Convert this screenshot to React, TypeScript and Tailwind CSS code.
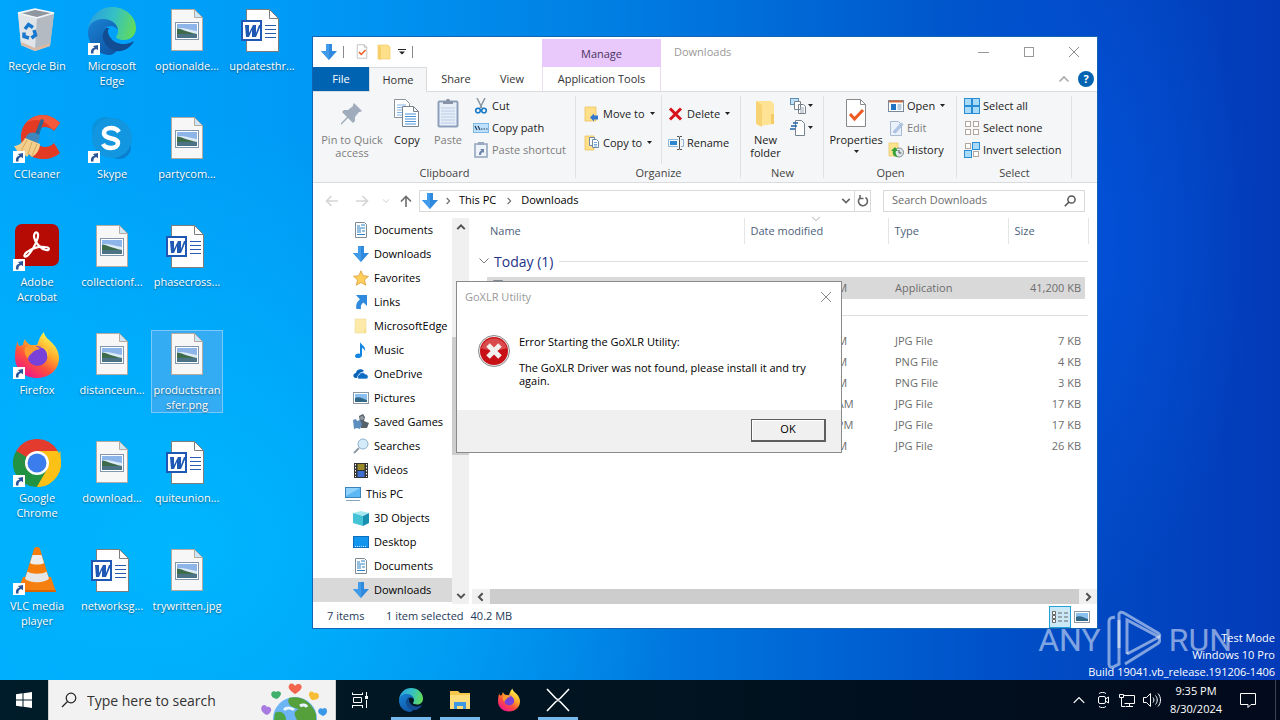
import type { ReactNode } from "react"

type IconProps = { className?: string }

/* ---------- small glyphs ---------- */

const Caret = ({ className = "w-[5px]" }: IconProps) => (
  <svg viewBox="0 0 6 4" className={className}>
    <path d="M0 0h6L3 3.6z" fill="#222" />
  </svg>
)

const Chevron = ({ className = "w-2 text-[#505050]", dir = "down", weight = 1.6 }: IconProps & { dir?: "up" | "down" | "left" | "right"; weight?: number }) => {
  const paths = {
    down: "M1.5 3.5L6 8l4.500-4.500",
    up: "M1.500 8.500L6 4l4.500 4.500",
    left: "M8 1.500L3.500 6L8 10.500",
    right: "M4 1.500L8.500 6L4 10.500",
  }
  return (
    <svg viewBox="0 0 12 12" className={className} fill="none" stroke="currentColor" strokeWidth={weight}>
      <path d={paths[dir]} />
    </svg>
  )
}

const CloseIcon = ({ className = "w-3" }: IconProps) => (
  <svg viewBox="0 0 12 12" className={className} stroke="currentColor" strokeWidth="1" fill="none">
    <path d="M1 1l10 10M11 1L1 11" />
  </svg>
)

const SearchGlass = ({ className = "w-4", weight = 1.5 }: IconProps & { weight?: number }) => (
  <svg viewBox="0 0 16 16" className={className} stroke="currentColor" strokeWidth={weight} fill="none">
    <circle cx="10" cy="6" r="4.800" />
    <path d="M6.500 9.500L1 15" />
  </svg>
)

/* ---------- desktop icons ---------- */

const ShortcutBadge = () => (
  <svg viewBox="0 0 12 12" className="absolute bottom-0 left-0 w-3">
    <rect width="12" height="12" fill="#fff" />
    <path d="M3 10.500C2.500 7 4 5 6.500 4.800L5 3l5-1v5.200L8.300 6C6 6.500 5.200 8 5.500 10.500z" fill="#2a5699" />
  </svg>
)

const RecycleBinIcon = () => (
  <svg viewBox="0 0 48 48" className="size-12">
    <path d="M5 6l17-4 19 4-4 33-15 5-14-6z" fill="#cdd3d8" />
    <path d="M5 6l19 5-2 33-14-6z" fill="#dfe4e8" />
    <path d="M24 11l17-5-4 33-15 5z" fill="#b3bac1" />
    <path d="M7 7l15-4 17 3-15 4z" fill="#8f979e" />
    <path d="M8 35l14 6 15-5-.5 3-14.500 5-14-6z" fill="#d9b9a6" />
    <path d="M5 6l17-4 19 4-17 5z" fill="none" stroke="#f3f6f8" strokeWidth="1.500" />
    <g fill="none" stroke="#1878cf" strokeWidth="3.500">
      <path d="M12 22l3.500-4.500 4.500 3" />
      <path d="M21 23l1.500 5-4 3" />
      <path d="M16 31l-5-1.500 0-4" />
    </g>
  </svg>
)

const EdgeIcon = ({ className = "size-12" }: IconProps) => (
  <svg viewBox="0 0 48 48" className={className}>
    <defs>
      <linearGradient id="edge-top" x1="0" y1="0.400" x2="1" y2="0.600">
        <stop offset="0" stopColor="#2b9fe0" />
        <stop offset="0.500" stopColor="#35c1c4" />
        <stop offset="1" stopColor="#62dc58" />
      </linearGradient>
      <linearGradient id="edge-left" x1="0" y1="0" x2="0.600" y2="1">
        <stop offset="0" stopColor="#1a83d4" />
        <stop offset="1" stopColor="#1058a8" />
      </linearGradient>
    </defs>
    <path d="M0 24C1 9 12 0 24 0c14 0 24 10 24 21 0 8-6 12-12 12-5 0-8-2-8-3 0-1 2-2 2-6 0-5-5-11-14-11C8 13 2 17 0 24z" fill="url(#edge-top)" />
    <path d="M0 25c0-8 7-13 15-13 9 0 14 5 15 11-2-3-5-4-7-4-5 0-8 4-8 9 0 9 7 15 15 15-3 3-6 5-9 5C9 47 0 37 0 25z" fill="url(#edge-left)" />
    <path d="M18 21c-3 3-4 7-3 11 2 8 10 13 18 12 5-1 9-4 12-8 1-1 0-2-1-1-8 4-18 2-22-5-2-3-3-6-1-9z" fill="#124c93" />
  </svg>
)

const ImageFileIcon = () => (
  <svg viewBox="0 0 48 48" className="size-12">
    <path d="M8.500 2.500h23l8 8v33h-31z" fill="#f7f7f7" stroke="#b5aaa2" />
    <path d="M31.500 2.500v8h8z" fill="#cfe6f7" stroke="#b5aaa2" />
    <rect x="12.500" y="15.500" width="23" height="17" fill="#fff" stroke="#8197ad" />
    <rect x="14" y="17" width="20" height="14" fill="#8db5ea" />
    <path d="M14 22c5-3 12 1 20 2v3H14z" fill="#dcebf5" />
    <path d="M14 22c4-1 8 3 20 5v1H14z" fill="#3d6b4b" />
    <path d="M14 27h20v4H14z" fill="#4c7385" />
  </svg>
)

const WordFileIcon = () => (
  <svg viewBox="0 0 48 48" className="size-12">
    <path d="M8.500 2.500h23l9 9v33h-32z" fill="#fff" stroke="#7d7d7d" />
    <path d="M31.500 2.500v9h9z" fill="#fff" stroke="#7d7d7d" />
    <path d="M27 18.500h11M27 22.500h11M27 26.500h11M27 30.500h11" stroke="#2a5bb0" strokeWidth="1.200" />
    <rect x="3" y="13" width="21" height="21" fill="#1f57b4" />
    <rect x="5" y="15" width="17" height="17" fill="#fff" />
    <path d="M7 18h4l0 8 4-8h3l0 8 3-8h2l-5 12h-4v-7l-3 7H8z" fill="#1f57b4" />
  </svg>
)

const CCleanerIcon = () => (
  <svg viewBox="0 0 48 48" className="size-12">
    <path d="M47 8C42 3 36 0 30 0 18 0 8 9 8 22s9 22 22 22c7 0 12-2 17-6l-6-10c-3 3-6 4-9 4-6 0-10-4-10-10s4-10 10-10c3 0 6 1 9 4z" fill="#e23a23" />
    <path d="M47 8C42 3 36 0 30 0c-7 0-13 3-17 8 6-4 17-5 24 4l4 3z" fill="#f25a3c" />
    <path d="M28 4l3 1-6 18-4-2z" fill="#2f6593" />
    <path d="M14 20c4-4 9-3 13 1l-2 7-13-4z" fill="#3f86bd" />
    <path d="M12 23l15 6c0 5-3 10-8 13l-3-3-2 3-4-4-4 1-5-8c5 0 9-4 11-8z" fill="#f3cf8d" />
    <path d="M14 25l-6 11M19 27l-4 12M24 29l-5 12" stroke="#d9a95c" fill="none" />
  </svg>
)

const SkypeIcon = () => (
  <svg viewBox="0 0 48 48" className="size-12">
    <circle cx="17" cy="15" r="13" fill="#0a93dc" />
    <circle cx="31" cy="32" r="12" fill="#0a7fd0" />
    <circle cx="24" cy="23" r="20" fill="#1296df" />
    <path d="M31 17c-2-3-5-4-8-4-4 0-7 2-7 5 0 7 14 4 14 10 0 3-3 5-7 5s-7-2-8-4" fill="none" stroke="#fff" strokeWidth="4.500" />
  </svg>
)

const AcrobatIcon = () => (
  <svg viewBox="0 0 48 48" className="size-12">
    <rect x="2" y="1" width="44" height="42" rx="7" fill="#b50b04" />
    <path d="M22 10c3-2 4 2 2 7-2 6-7 14-10 16s-4-1 0-4c5-4 13-6 18-5 5 0 5 4 1 3-5-1-11-7-12-13 0-2 0-3 1-4z" fill="none" stroke="#fff" strokeWidth="2.200" />
  </svg>
)

const FirefoxIcon = ({ className = "size-12" }: IconProps) => (
  <svg viewBox="0 0 48 48" className={className}>
    <defs>
      <linearGradient id="fx-body" x1="0.800" y1="0.100" x2="0.250" y2="0.950">
        <stop offset="0" stopColor="#fff44f" />
        <stop offset="0.350" stopColor="#ffa82a" />
        <stop offset="0.650" stopColor="#ff4f3c" />
        <stop offset="1" stopColor="#f0188a" />
      </linearGradient>
    </defs>
    <path d="M5 10c0 2 0 4 1 5l4-1c0-2 1-4 2-6 1 3 3 5 6 6h6c2-5 3-9 7-13 0 5 6 8 9 12 3 3 6 8 6 14 0 11-9 20-22 20S2 38 2 26c0-6 1-12 3-16z" fill="url(#fx-body)" />
    <circle cx="24.500" cy="25" r="10" fill="#7a41d8" />
    <path d="M12 17c4-4 12-3 15 1-5 1-6 2-8 4s-4 3-4 6c-3-3-4-7-3-11z" fill="#ff9a2e" />
    <path d="M25 16c6 0 10 4 9 10 3-4 2-12-9-10z" fill="#ffc83a" />
  </svg>
)

const ChromeIcon = () => (
  <svg viewBox="0 0 48 48" className="size-12">
    <path d="M24 24L3.200 12A24 24 0 0 1 44.800 12z" fill="#e33b2e" />
    <path d="M24 24L44.800 12A24 24 0 0 1 24 48z" fill="#fbc116" />
    <path d="M24 24L24 48A24 24 0 0 1 3.200 12z" fill="#229342" />
    <path d="M24 12h20.800L34.400 30z" fill="#fbc116" />
    <path d="M34.400 30L24 48 13.600 30z" fill="#229342" />
    <path d="M13.600 30L3.200 12 24 12z" fill="#e33b2e" />
    <path d="M3.200 12L13.600 30 24 24z" fill="#229342" />
    <path d="M34.400 30L24 48l8-1c8-4 14-10 15.500-19V12z" fill="#fbc116" />
    <circle cx="24" cy="24" r="12" fill="#fff" />
    <circle cx="24" cy="24" r="9.500" fill="#3b7dec" />
  </svg>
)

const VlcIcon = () => (
  <svg viewBox="0 0 48 48" className="size-12">
    <path d="M10 30h28l5 15H4z" fill="#f58010" />
    <path d="M4 43h39v2H4z" fill="#d96500" />
    <path d="M24 0c2 0 3 1 3 2l9 29c0 6-24 6-24 0L21 2c0-1 1-2 3-2z" fill="#f47d0b" />
    <path d="M19.500 8h9l2.500 8c-3 2-11 2-14 0z" fill="#eee" />
    <path d="M14.500 24.500c4 3 15 3 19 0l2.500 7c-4 5-20 5-24 0z" fill="#e6e6e6" />
  </svg>
)

/* ---------- explorer icons ---------- */

const DownArrow = ({ className = "size-4" }: IconProps) => (
  <svg viewBox="0 0 16 16" className={className}>
    <path d="M5 0h6v7h5l-8 9-8-9h5z" fill="#2f8ade" />
    <path d="M5 0h3v16L0 7h5z" fill="#409bea" />
  </svg>
)

const FolderIcon = ({ className = "size-4" }: IconProps) => (
  <svg viewBox="0 0 16 16" className={className}>
    <path d="M2 1h10l2 2v12H2z" fill="#ffe08a" stroke="#eec255" strokeWidth="0.600" />
    <path d="M2 1l3 2v13l-3-1z" fill="#f6cf6b" />
  </svg>
)

const PaleFolderIcon = () => (
  <svg viewBox="0 0 16 16" className="size-4">
    <path d="M2 1h11v14H2z" fill="#fdeaa8" stroke="#eddb9b" strokeWidth="0.600" />
    <path d="M11 11h2v4h-2z" fill="#f6dd8c" />
  </svg>
)

const DocIcon = () => (
  <svg viewBox="0 0 16 16" className="size-4">
    <path d="M2.500.5h9l2 2v13h-11z" fill="#fff" stroke="#7f8b95" />
    <path d="M4 4h3M8 3h4M4 6h8M4 8h4M9 9h3M4 10h4M4 12.500h8" stroke="#2d84c4" strokeWidth="1.200" />
  </svg>
)

const StarIcon = () => (
  <svg viewBox="0 0 16 16" className="size-4">
    <path d="M8 .8l2.200 4.900 5.300.6-4 3.600 1.200 5.300L8 12.500l-4.700 2.700 1.200-5.300-4-3.600 5.300-.6z" fill="#ffcf5c" stroke="#d99b38" strokeWidth="0.800" />
  </svg>
)

const LinkArrowIcon = () => (
  <svg viewBox="0 0 16 16" className="size-4">
    <path d="M3 1h11v11l-3.500-3.500C8 10 7.500 12 8 15H3.500C2.500 11 4 7.500 7 5.500z" fill="#2f8ade" />
  </svg>
)

const MusicIcon = () => (
  <svg viewBox="0 0 16 16" className="size-4">
    <path d="M7 0c1 3 6 4 5 9-1-2-2-3-3-3v7c0 4-7 4-7 1 0-2 3-3 5-2z" fill="#1485e0" />
  </svg>
)

const OneDriveIcon = () => (
  <svg viewBox="0 0 16 16" className="size-4">
    <path d="M3 12c-4 0-3-5 0-5 0-4 6-5 8-2l-4 2-3 5z" fill="#0a64b8" />
    <path d="M6 13c-2 0-2-4 0-4 1-3 5-3 6-1 4 0 4 5 1 5z" fill="#0f6ec4" stroke="#fff" strokeWidth="0.600" />
  </svg>
)

const PictureIcon = () => (
  <svg viewBox="0 0 16 16" className="size-4">
    <rect x="0.500" y="2.500" width="15" height="11" fill="#fff" stroke="#8c98a4" />
    <rect x="2" y="4" width="12" height="8" fill="#8ac0ef" />
    <path d="M2 8c4-2 8 1 12 2v2H2z" fill="#336788" />
  </svg>
)

const GamesIcon = () => (
  <svg viewBox="0 0 16 16" className="size-4">
    <path d="M6 2l4-2 2 3-1 4 5 2-2 5H8z" fill="#56616b" />
    <path d="M0 6l3-1 1 2 3-1 2 4-2 5-3-1-3 1z" fill="#5d8fbe" />
    <circle cx="9" cy="4" r="2" fill="#909aa3" />
  </svg>
)

const SearchesIcon = () => (
  <svg viewBox="0 0 16 16" className="size-4">
    <path d="M6 10l-5 5" stroke="#8d9aa8" strokeWidth="2" />
    <circle cx="10" cy="6" r="5" fill="#d4ebfa" stroke="#8fb0c8" />
  </svg>
)

const VideosIcon = () => (
  <svg viewBox="0 0 16 16" className="size-4">
    <rect x="1" y="1" width="14" height="15" fill="#333" />
    <path d="M2.500 2v13M13.500 2v13" stroke="#fff" strokeDasharray="1.500 1.500" />
    <rect x="4.500" y="2" width="7" height="6" fill="#9a8a2a" />
    <rect x="4.500" y="9" width="7" height="6" fill="#3c6fd0" />
  </svg>
)

const PcIcon = () => (
  <svg viewBox="0 0 16 16" className="size-4">
    <rect x="0.500" y="1.500" width="15" height="10" fill="#5bb8f5" stroke="#3b83b8" />
    <path d="M1 2h14L1 10z" fill="#8fd2fb" />
    <path d="M1 14.500h14" stroke="#8ba4b8" />
  </svg>
)

const CubeIcon = () => (
  <svg viewBox="0 0 16 16" className="size-4">
    <path d="M0 3l8-2 8 2-6 3z" fill="#a5e8f0" />
    <path d="M0 3l10 3v10L0 13z" fill="#45c3d6" />
    <path d="M10 6l6-3v10l-6 3z" fill="#178fae" />
  </svg>
)

const DesktopIcon = () => (
  <svg viewBox="0 0 16 16" className="size-4">
    <rect x="0.500" y="2.500" width="15" height="11" fill="#1195ee" stroke="#0b6fbd" />
    <path d="M2 12.500h12" stroke="#cbe7fb" strokeDasharray="1 1" />
  </svg>
)

/* ---------- ribbon icons ---------- */

const PinIcon = () => (
  <svg viewBox="0 0 32 32" className="size-8">
    <path d="M18 5l8 8-2 1-1 0-4 5 0 4-2 2-5-5-6 6-1 1 0-2 6-6-5-5 2-2 4 0 5-4 0-1z" fill="#a0acbc" />
  </svg>
)

const CopyIcon = () => (
  <svg viewBox="0 0 32 32" className="size-8">
    <path d="M3.500 1.500h11l4 4v14h-15z" fill="#fff" stroke="#8a939c" />
    <path d="M6 7h9M6 9.500h10M6 12h10M6 14.500h10M6 17h10" stroke="#7fb4e4" />
    <path d="M11.500 8.500h11l5 5v15h-16z" fill="#fff" stroke="#7a838c" />
    <path d="M22.500 8.500v5h5" fill="none" stroke="#7a838c" />
    <path d="M14 16h11M14 18.500h11M14 21h11M14 23.500h11M14 26h11" stroke="#4a92d8" />
  </svg>
)

const PasteIcon = () => (
  <svg viewBox="0 0 32 32" className="size-8">
    <rect x="6.500" y="3.500" width="19" height="25" rx="1" fill="#e6eef8" stroke="#8e9fbb" strokeWidth="2" />
    <path d="M11 6V3h3c0-3 4-3 4 0h3v3z" fill="#8794a8" />
    <path d="M9 10h14M9 13h14M9 16h14M9 19h14M9 22h14M9 25h14" stroke="#b9cce6" />
  </svg>
)

const CutIcon = () => (
  <svg viewBox="0 0 16 16" className="size-4" fill="none">
    <path d="M4 0l5 10M12 0L7 10" stroke="#8896a4" strokeWidth="1.500" />
    <circle cx="5" cy="12.500" r="2.300" stroke="#1979c9" strokeWidth="1.600" />
    <circle cx="11" cy="12.500" r="2.300" stroke="#1979c9" strokeWidth="1.600" />
  </svg>
)

const CopyPathIcon = () => (
  <svg viewBox="0 0 16 16" className="size-4">
    <rect x="0.500" y="3.500" width="15" height="9" fill="#bfe0fa" stroke="#7db7e4" />
    <path d="M2 6l2 4M5 6l2 4M8 9h1.500M10.500 9H12M13 9h1.500" stroke="#20405f" strokeWidth="1.200" />
  </svg>
)

const PasteShortcutIcon = () => (
  <svg viewBox="0 0 16 16" className="size-4">
    <rect x="2" y="2" width="12" height="13" fill="#eef3fa" stroke="#98a7bf" strokeWidth="1.600" />
    <rect x="5" y="0" width="6" height="3" fill="#98a7bf" />
    <path d="M6 13c0-3 1-4 2.500-4.500L7 7h4v4l-1-1c-1 .5-2 1-2 3z" fill="#6d83a8" />
  </svg>
)

const MoveToIcon = () => (
  <svg viewBox="0 0 16 16" className="size-4">
    <path d="M1 1h11v14H1z" fill="#ffdf88" stroke="#e9bd55" strokeWidth="0.700" />
    <path d="M14 9.500v4h-4v2l-4-4 4-4v2z" fill="#3276cf" />
  </svg>
)

const CopyToIcon = () => (
  <svg viewBox="0 0 16 16" className="size-4">
    <path d="M1 1h9v14H1z" fill="#ffdf88" stroke="#e9bd55" strokeWidth="0.700" />
    <path d="M5.500 2.500h5v8h-5z" fill="#fff" stroke="#6e8aa6" />
    <path d="M8.500 4.500h4l2 2v6h-6z" fill="#fff" stroke="#6e8aa6" />
    <path d="M10 7.500h3M10 9.500h3M10 11h3" stroke="#4a92d8" strokeWidth="0.800" />
  </svg>
)

const DeleteIcon = () => (
  <svg viewBox="0 0 16 16" className="size-4" stroke="#d8121c" strokeWidth="3" fill="none">
    <path d="M2 2.500l11 11M13 2.500l-11 11" />
  </svg>
)

const RenameIcon = () => (
  <svg viewBox="0 0 16 16" className="size-4" fill="none">
    <path d="M10 4.500H.5v7H10M13 4.500h2.500v7H13" stroke="#8eb4d8" />
    <rect x="2" y="6" width="7" height="4" fill="#2b86d2" />
    <path d="M9 1.500h2l.5.5.5-.5h2M9 14.500h2l.5-.5.5.5h2M11.500 2v12" stroke="#555" />
  </svg>
)

const NewFolderIcon = () => (
  <svg viewBox="0 0 32 32" className="size-8">
    <path d="M6 3h15l3 3v20l-15 2-3-2z" fill="#ffe394" />
    <path d="M6 3l6 4v22l-6-4z" fill="#f8d374" />
    <path d="M21 16h3v10h-3z" fill="#f4cb66" />
  </svg>
)

const NewItemIcon = () => (
  <svg viewBox="0 0 16 16" className="size-4" fill="#fff">
    <rect x="0.500" y="0.500" width="8" height="6" fill="#bfe0fa" stroke="#5f8fb3" />
    <path d="M4.500 3.500h6v8h-6zM8.500 6.500h5l2 2v7h-7z" stroke="#76828d" />
    <path d="M10 10h4M10 12h4M10 14h4" stroke="#9aa6b0" />
  </svg>
)

const EasyAccessIcon = () => (
  <svg viewBox="0 0 16 16" className="size-4" fill="none">
    <path d="M5.500.5h6l3 3v12h-9z" fill="#fff" stroke="#76828d" />
    <path d="M3 3h5M1 6h6M0 9h5" stroke="#1f66ae" strokeWidth="1.400" />
  </svg>
)

const PropertiesIcon = ({ className = "size-8" }: IconProps) => (
  <svg viewBox="0 0 32 32" className={className}>
    <path d="M6.500 1.500h14l5 5v22h-19z" fill="#fff" stroke="#8a8a8a" />
    <path d="M20.500 1.500v5h5" fill="none" stroke="#8a8a8a" />
    <path d="M10 16l4.500 5L23 12" fill="none" stroke="#ee5a24" strokeWidth="3" />
  </svg>
)

const OpenIcon = () => (
  <svg viewBox="0 0 16 16" className="size-4">
    <rect x="0.500" y="2.500" width="15" height="11" fill="#fff" stroke="#77899b" />
    <path d="M1 3.500h14" stroke="#d16b3c" strokeWidth="2" />
    <rect x="3" y="6" width="5" height="6" fill="#1f75c4" />
    <path d="M9.500 7h4M9.500 9h4M9.500 11h4" stroke="#6c9ac2" />
  </svg>
)

const EditIcon = () => (
  <svg viewBox="0 0 16 16" className="size-4">
    <path d="M2.500 1.500h8l3 3v11h-11z" fill="#e9f1fb" stroke="#a9b9d2" />
    <path d="M5 12l8-9 2 1.500L7.500 13z" fill="#b3c7e6" stroke="#8ea7cc" strokeWidth="0.600" />
  </svg>
)

const HistoryIcon = () => (
  <svg viewBox="0 0 16 16" className="size-4">
    <path d="M1 1h9v13H1z" fill="#ffe48f" stroke="#e6c25e" strokeWidth="0.700" />
    <circle cx="11" cy="10.500" r="4.500" fill="#dfe7ea" stroke="#808b90" />
    <path d="M11 8v3h2.500" fill="none" stroke="#555" />
    <path d="M10 15c-4 0-6-3-5-6H3l4-4 3 4H8c-1 2 0 4 2 6z" fill="#35a138" />
  </svg>
)

const SelectIcon = ({ filled }: { filled: boolean[] }) => (
  <svg viewBox="0 0 16 16" className="size-4">
    {filled.map((on, i) => {
      const x = (i % 2) * 8
      const y = Math.floor(i / 2) * 8
      return on ? (
        <rect key={i} x={x + 0.5} y={y + 0.5} width="7" height="7" fill="#a8dafa" stroke="#2a8dd4" />
      ) : (
        <rect key={i} x={x + 1.5} y={y + 1.5} width="5" height="5" fill="#fff" stroke="#b3a79d" />
      )
    })}
  </svg>
)

const ErrorIcon = () => (
  <svg viewBox="0 0 32 32" className="size-8 shrink-0">
    <circle cx="16" cy="16" r="15.500" fill="#ececec" stroke="#8b8b8b" />
    <circle cx="16" cy="16" r="14" fill="#c81117" />
    <path d="M3 13a13.500 13.500 0 0 1 26 0c-8 3-18 3-26 0z" fill="#d94a4c" />
    <path d="M10 10l12 12M22 10L10 22" stroke="#f1f1ee" strokeWidth="5" />
  </svg>
)

/* ---------- desktop ---------- */

type DesktopItem = { label: string; icon: ReactNode; shortcut?: boolean; selected?: boolean }

const desktopItems: DesktopItem[] = [
  { label: "Recycle Bin", icon: <RecycleBinIcon /> },
  { label: "CCleaner", icon: <CCleanerIcon />, shortcut: true },
  { label: "Adobe Acrobat", icon: <AcrobatIcon />, shortcut: true },
  { label: "Firefox", icon: <FirefoxIcon />, shortcut: true },
  { label: "Google Chrome", icon: <ChromeIcon />, shortcut: true },
  { label: "VLC media player", icon: <VlcIcon />, shortcut: true },
  { label: "Microsoft Edge", icon: <EdgeIcon />, shortcut: true },
  { label: "Skype", icon: <SkypeIcon />, shortcut: true },
  { label: "collectionf...", icon: <ImageFileIcon /> },
  { label: "distanceun...", icon: <ImageFileIcon /> },
  { label: "download...", icon: <ImageFileIcon /> },
  { label: "networksg...", icon: <WordFileIcon /> },
  { label: "optionalde...", icon: <ImageFileIcon /> },
  { label: "partycom...", icon: <ImageFileIcon /> },
  { label: "phasecross...", icon: <WordFileIcon /> },
  { label: "productstransfer.png", icon: <ImageFileIcon />, selected: true },
  { label: "quiteunion...", icon: <WordFileIcon /> },
  { label: "trywritten.jpg", icon: <ImageFileIcon /> },
  { label: "updatesthr...", icon: <WordFileIcon /> },
]

const DesktopIcons = () => (
  <div className="grid grid-flow-col grid-rows-[repeat(6,108px)] auto-cols-[75px] w-max">
    {desktopItems.map((item) => (
      <button
        key={item.label}
        className={`mt-[6px] ml-px mr-[2px] self-start flex flex-col items-center border ${
          item.selected ? "border-[#7cc8f8] bg-[#33acf3]" : "border-transparent"
        }`}
      >
        <span className="relative block size-12">
          {item.icon}
          {item.shortcut && <ShortcutBadge />}
        </span>
        <span className="mt-[3px] w-full text-[11px] leading-[15px] text-white text-center break-words [text-shadow:0_1px_2px_rgba(0,0,0,0.5)]">
          {item.label}
        </span>
      </button>
    ))}
  </div>
)

/* ---------- explorer ribbon ---------- */

const RibbonGroup = ({ title, width, children }: { title: string; width: string; children: ReactNode }) => (
  <div className={`relative flex flex-col shrink-0 ${width}`}>
    <div className="flex flex-1 pt-[3px]">{children}</div>
    <div className="h-[18px] text-center leading-[18px] text-[#444]">{title}</div>
    <div className="absolute right-0 top-1 bottom-1 w-px bg-[#e0e1e2]" />
  </div>
)

const BigButton = ({ icon, children, width, dim }: { icon: ReactNode; children: ReactNode; width: string; dim?: boolean }) => (
  <button className={`flex flex-col items-center self-start pt-[3px] leading-[13px] ${width} ${dim ? "text-[#7d7d7d]" : "text-[#222]"}`}>
    {icon}
    <span className="mt-[3px]">{children}</span>
  </button>
)

const SmallButton = ({ icon, label, caret, dim }: { icon: ReactNode; label?: string; caret?: boolean; dim?: boolean }) => (
  <button className={`flex items-center h-[22px] whitespace-nowrap ${dim ? "text-[#7d7d7d]" : "text-[#222]"}`}>
    {icon}
    {label && <span className="ml-[3px]">{label}</span>}
    {caret && <Caret className={label ? "w-[5px] ml-[5px]" : "w-[5px] ml-[2px]"} />}
  </button>
)

const Ribbon = () => (
  <div className="flex h-[92px] bg-[#f5f6f7] border-y border-[#dadbdc]">
    <RibbonGroup title="Clipboard" width="w-[263px]">
      <BigButton width="w-[78px]" icon={<PinIcon />} dim>
        Pin to Quick access
      </BigButton>
      <BigButton width="w-[32px]" icon={<CopyIcon />}>Copy</BigButton>
      <BigButton width="w-[50px]" icon={<PasteIcon />} dim>Paste</BigButton>
      <div>
        <SmallButton icon={<CutIcon />} label="Cut" />
        <SmallButton icon={<CopyPathIcon />} label="Copy path" />
        <SmallButton icon={<PasteShortcutIcon />} label="Paste shortcut" dim />
      </div>
    </RibbonGroup>
    <RibbonGroup title="Organize" width="w-[165px]">
      <div className="flex flex-col gap-[7px] pt-2 pl-2 w-[86px] border-r border-[#e0e1e2]">
        <SmallButton icon={<MoveToIcon />} label="Move to" caret />
        <SmallButton icon={<CopyToIcon />} label="Copy to" caret />
      </div>
      <div className="flex flex-col gap-[7px] pt-2 pl-[6px]">
        <SmallButton icon={<DeleteIcon />} label="Delete" caret />
        <SmallButton icon={<RenameIcon />} label="Rename" />
      </div>
    </RibbonGroup>
    <RibbonGroup title="New" width="w-[83px]">
      <BigButton width="w-[49px]" icon={<NewFolderIcon />}>
        New folder
      </BigButton>
      <div>
        <SmallButton icon={<NewItemIcon />} caret />
        <SmallButton icon={<EasyAccessIcon />} caret />
      </div>
    </RibbonGroup>
    <RibbonGroup title="Open" width="w-[133px]">
      <BigButton width="w-[64px]" icon={<PropertiesIcon />}>
        <span className="flex flex-col items-center">
          Properties
          <Caret className="w-[5px] mt-1" />
        </span>
      </BigButton>
      <div>
        <SmallButton icon={<OpenIcon />} label="Open" caret />
        <SmallButton icon={<EditIcon />} label="Edit" dim />
        <SmallButton icon={<HistoryIcon />} label="History" />
      </div>
    </RibbonGroup>
    <RibbonGroup title="Select" width="w-[115px]">
      <div className="pl-[7px]">
        <SmallButton icon={<SelectIcon filled={[true, true, true, true]} />} label="Select all" />
        <SmallButton icon={<SelectIcon filled={[false, false, false, false]} />} label="Select none" />
        <SmallButton icon={<SelectIcon filled={[false, true, true, false]} />} label="Invert selection" />
      </div>
    </RibbonGroup>
  </div>
)

/* ---------- explorer header ---------- */

const TitleBar = () => (
  <div className="flex h-[54px]">
    <div className="flex flex-col w-[229px]">
      <div className="flex items-center h-[30px] pl-2 gap-[6px]">
        <DownArrow />
        <span className="w-px h-3 bg-[#8a8a8a]" />
        <button className="ml-1" aria-label="Properties"><PropertiesIcon className="size-4" /></button>
        <button aria-label="New folder"><FolderIcon /></button>
        <button aria-label="Customize toolbar">
          <svg viewBox="0 0 8 6" className="w-2">
            <path d="M0 .5h8" stroke="#222" />
            <path d="M1 2.500h6L4 5.500z" fill="#222" />
          </svg>
        </button>
        <span className="w-px h-3 bg-[#8a8a8a]" />
      </div>
      <div className="flex h-[24px] leading-[24px] text-[#333] text-center">
        <button className="w-[56px] bg-[#0063b1] text-white">File</button>
        <button className="relative w-[58px] h-[25px] leading-[22px] bg-[#f5f6f7] border border-b-0 border-[#dadbdc]">Home</button>
        <button className="w-[58px]">Share</button>
        <button className="w-[54px]">View</button>
      </div>
    </div>
    <div className="w-[119px] mt-[2px] text-center">
      <div className="h-[28px] leading-[29px] bg-[#e9c9fb] text-[#4a3360]">Manage</div>
      <button className="w-full h-[24px] leading-[24px] border-x border-[#eadcf2] text-[#333] whitespace-nowrap">Application Tools</button>
    </div>
    <div className="ml-[13px] leading-[30px] text-[#999]">Downloads</div>
    <div className="ml-auto flex flex-col text-[#8a8a8a]">
      <div className="flex h-[30px]">
        <button aria-label="Minimize" className="w-[45px] flex items-center justify-center"><span className="w-[11px] h-px bg-[#999]" /></button>
        <button aria-label="Maximize" className="w-[45px] flex items-center justify-center"><span className="size-[10px] border border-[#999]" /></button>
        <button aria-label="Close" className="w-[46px] flex items-center justify-center"><CloseIcon className="w-3" /></button>
      </div>
      <div className="flex items-center justify-end gap-[8px] h-[24px] pr-[3px]">
        <Chevron dir="up" className="w-3 text-[#aaa]" />
        <button aria-label="Help" className="size-4 rounded-full bg-[#0063b1] text-white font-bold text-[11px] leading-4">?</button>
      </div>
    </div>
  </div>
)

const NavArrow = ({ d, className }: IconProps & { d: string }) => (
  <svg viewBox="0 0 14 12" className={`w-[14px] ${className}`} fill="none" stroke="currentColor" strokeWidth="1.600">
    <path d={d} />
  </svg>
)

const AddressBar = () => (
  <div className="flex items-center h-[35px] px-3">
    <button aria-label="Back"><NavArrow d="M13 6H2M6.500 1L1.500 6l5 5" className="text-[#d5d5d5]" /></button>
    <button aria-label="Forward" className="ml-4"><NavArrow d="M1 6h11M7.500 1l5 5-5 5" className="text-[#d5d5d5]" /></button>
    <Chevron className="w-2 ml-[13px] text-[#ddd]" />
    <button aria-label="Up" className="ml-[9px]"><NavArrow d="M7 12V1.500M2 6.500l5-5 5 5" className="text-[#6d6d6d]" /></button>
    <div className="flex flex-1 items-center h-[22px] ml-[6px] border border-[#d9d9d9] pl-[2px]">
      <DownArrow />
      <Chevron dir="right" className="w-2 ml-[6px] text-[#666]" />
      <button className="ml-[7px] text-black">This PC</button>
      <Chevron dir="right" className="w-2 ml-[9px] text-[#666]" />
      <button className="ml-[8px] text-black">Downloads</button>
      <button aria-label="Previous locations" className="ml-auto mr-[3px]"><Chevron className="w-[10px] text-[#666]" weight={2} /></button>
      <button aria-label="Refresh" className="flex items-center justify-center w-[16px] h-full border-l border-[#d9d9d9]">
        <svg viewBox="0 0 12 12" className="w-3" fill="none" stroke="#666" strokeWidth="1.600">
          <path d="M3 2.800A4.500 4.500 0 1 0 8.500 2.500M3 0v3.500h3.500" />
        </svg>
      </button>
    </div>
    <label className="flex items-center w-[202px] h-[22px] ml-3 border border-[#d9d9d9] px-2">
      <input type="text" aria-label="Search Downloads" placeholder="Search Downloads" className="flex-1 min-w-0 outline-none placeholder:text-[#6d6d6d]" />
      <SearchGlass className="w-3 text-[#555]" weight={2} />
    </label>
  </div>
)

/* ---------- explorer body ---------- */

const navItems: { label: string; icon: ReactNode; root?: boolean; selected?: boolean }[] = [
  { label: "Documents", icon: <DocIcon /> },
  { label: "Downloads", icon: <DownArrow /> },
  { label: "Favorites", icon: <StarIcon /> },
  { label: "Links", icon: <LinkArrowIcon /> },
  { label: "MicrosoftEdge", icon: <PaleFolderIcon /> },
  { label: "Music", icon: <MusicIcon /> },
  { label: "OneDrive", icon: <OneDriveIcon /> },
  { label: "Pictures", icon: <PictureIcon /> },
  { label: "Saved Games", icon: <GamesIcon /> },
  { label: "Searches", icon: <SearchesIcon /> },
  { label: "Videos", icon: <VideosIcon /> },
  { label: "This PC", icon: <PcIcon />, root: true },
  { label: "3D Objects", icon: <CubeIcon /> },
  { label: "Desktop", icon: <DesktopIcon /> },
  { label: "Documents", icon: <DocIcon /> },
  { label: "Downloads", icon: <DownArrow />, selected: true },
]

const NavPane = () => (
  <div className="flex w-[156px] shrink-0">
    <ul className="flex-1 min-w-0">
      {navItems.map((item, i) => (
        <li key={i}>
          <button
            className={`flex w-full items-center gap-[5px] h-6 text-black whitespace-nowrap ${item.root ? "pl-8" : "pl-10"} ${
              item.selected ? "bg-[#d9d9d9]" : ""
            }`}
          >
            {item.icon}
            {item.label}
          </button>
        </li>
      ))}
    </ul>
    <div className="flex flex-col items-center w-[17px] bg-[#f0f0f0] pt-1 pb-[3px]">
      <Chevron dir="up" className="w-[10px] text-[#505050]" weight={2.4} />
      <div className="w-full h-[118px] mt-[105px] bg-[#cdcdcd]" />
      <Chevron className="w-[10px] mt-auto text-[#505050]" weight={2.4} />
    </div>
  </div>
)

type FileRow = { name: string; date: string; type: string; size: string }

const earlierFiles: FileRow[] = [
  { name: "sessionlight.jpg", date: "8/28/2024 9:12 PM", type: "JPG File", size: "7 KB" },
  { name: "notesdemo.png", date: "8/28/2024 4:26 PM", type: "PNG File", size: "4 KB" },
  { name: "rolesmain.png", date: "8/27/2024 3:41 PM", type: "PNG File", size: "3 KB" },
  { name: "teamalso.jpg", date: "8/26/2024 10:35 AM", type: "JPG File", size: "17 KB" },
  { name: "stationcd.jpg", date: "8/25/2024 11:08 PM", type: "JPG File", size: "17 KB" },
  { name: "distanceunder.jpg", date: "8/24/2024 6:17 PM", type: "JPG File", size: "26 KB" },
]

const GroupRow = ({ label }: { label: string }) => (
  <tr>
    <td colSpan={4} className="h-8 p-0">
      <div className="flex items-center gap-[6px] pl-[6px] text-[14px] text-[#1e3287]">
        <Chevron className="w-3 -mr-[2px] text-[#777]" weight={1} />
        {label}
        <span className="flex-1 h-px bg-[#dedede]" />
      </div>
    </td>
  </tr>
)

const FileTable = () => (
  <table className="w-[616px] table-fixed border-collapse text-left text-[#6d6d6d]">
    <colgroup>
      <col className="w-[272px]" />
      <col className="w-[144px]" />
      <col className="w-[120px]" />
      <col className="w-[80px]" />
    </colgroup>
    <thead>
      <tr className="h-[26px] text-[#4c607a]">
        <th className="font-normal pl-[18px] border-r border-[#e5e5e5]">Name</th>
        <th className="relative font-normal pl-[6px] border-r border-[#e5e5e5]">
          Date modified
          <Chevron className="absolute top-[-4px] left-[66px] w-[10px] text-[#999]" weight={1} />
        </th>
        <th className="font-normal pl-[6px] border-r border-[#e5e5e5]">Type</th>
        <th className="font-normal pl-[6px] border-r border-[#e5e5e5]">Size</th>
      </tr>
    </thead>
    <tbody>
      <tr className="h-px"><td colSpan={4} /></tr>
      <GroupRow label="Today (1)" />
      <tr className="h-[22px]">
        <td className="p-0 pl-[15px]">
          <div className="flex items-center gap-2 h-[22px] pl-1 bg-[#d9d9d9]">
            <DocIcon />
            goxlr-utility-1.1.4.exe
          </div>
        </td>
        <td className="p-0 pl-[7px] bg-[#d9d9d9]">8/30/2024 9:35 PM</td>
        <td className="p-0 pl-[7px] bg-[#d9d9d9]">Application</td>
        <td className="p-0 pr-[3px]">
          <div className="h-[22px] leading-[22px] pr-1 bg-[#d9d9d9] text-right">41,200 KB</div>
        </td>
      </tr>
      <GroupRow label="Earlier this month (6)" />
      {earlierFiles.map((file) => (
        <tr key={file.name} className="h-[21px]">
          <td className="p-0 pl-[19px]">
            <div className="flex items-center gap-1">
              <PictureIcon />
              {file.name}
            </div>
          </td>
          <td className="p-0 pl-[7px]">{file.date}</td>
          <td className="p-0 pl-[7px]">{file.type}</td>
          <td className="p-0 pr-[7px] text-right">{file.size}</td>
        </tr>
      ))}
    </tbody>
  </table>
)

const ExplorerWindow = () => (
  <section className="absolute left-[312px] top-[36px] w-[786px] border border-[#1464b4] bg-white text-[11px]">
    <TitleBar />
    <Ribbon />
    <AddressBar />
    <div className="flex h-[386px]">
      <NavPane />
      <div className="flex flex-1 min-w-0 flex-col pl-[3px]">
        <FileTable />
        <div className="mt-auto flex items-center justify-between h-[15px] px-1 bg-[#f0f0f0]">
          <Chevron dir="left" className="w-[10px] text-[#505050]" weight={2.4} />
          <div className="flex-1 h-full mx-[4px] bg-[#cdcdcd]" />
          <Chevron dir="right" className="w-[10px] text-[#505050]" weight={2.4} />
        </div>
      </div>
    </div>
    <div className="flex items-center h-6 pt-px pl-[14px] pr-1 text-[#1e395b]">
      <span className="w-[59px]">7 items</span>
      <span>1 item selected</span>
      <span className="ml-[7px]">40.2 MB</span>
      <button aria-label="Details view" className="ml-auto flex items-center justify-center w-[22px] h-[22px] border border-[#26a0da] bg-[#cbe8f6]">
        <svg viewBox="0 0 16 14" className="w-4" stroke="#666" fill="none">
          <path d="M.5 1.500h3v3h-3zM.5 5.500h3v3h-3zM.5 9.500h3v3h-3z" fill="#fff" />
          <path d="M6 3h4M12 3h4M6 7h4M12 7h4M6 11h4M12 11h4" />
        </svg>
      </button>
      <button aria-label="Large icons view" className="flex items-center justify-center w-[22px] h-[22px]">
        <PictureIcon />
      </button>
    </div>
  </section>
)

/* ---------- error dialog ---------- */

const ErrorDialog = () => (
  <section role="dialog" aria-labelledby="dialog-title" className="absolute left-[456px] top-[281px] w-[386px] border border-[#8a8a8a] bg-white text-[11px]">
    <div className="flex items-center justify-between h-[30px] pl-2 pr-[9px] text-[#999]">
      <h2 id="dialog-title">GoXLR Utility</h2>
      <button aria-label="Close"><CloseIcon className="w-3 text-[#888]" /></button>
    </div>
    <div className="flex gap-[9px] h-[98px] pt-[23px] px-[21px] leading-[13px] text-black">
      <ErrorIcon />
      <div>
        <p>Error Starting the GoXLR Utility:</p>
        <p className="mt-[13px]">The GoXLR Driver was not found, please install it and try again.</p>
      </div>
    </div>
    <div className="flex items-center justify-end h-[42px] pb-[2px] pr-[15px] bg-[#f0f0f0]">
      <button className="w-[75px] h-[23px] border border-r-2 border-b-2 border-[#5e5e5e] bg-[#f0f0f0] text-black shadow-[inset_1px_1px_0_#fff]">OK</button>
    </div>
  </section>
)

/* ---------- watermark ---------- */

const Watermark = () => (
  <div className="absolute right-[48px] bottom-[10px] flex items-center gap-[6px] text-white/50 font-['Roboto','Liberation_Sans',sans-serif] text-[32px] leading-[60px]">
    <span>ANY</span>
    <svg viewBox="0 0 56 60" className="w-[56px]" fill="none" stroke="currentColor" strokeWidth="3">
      <path d="M8 7L4 8Q2 9 2 12v42q0 4 4 3l6-3V10" />
      <path d="M12 38V4q1-3 5-1l34 20q3 2 1 4l-32-17v34" />
      <path d="M20 44l32-17q2 5-2 7L18 54" />
    </svg>
    <span>RUN</span>
  </div>
)

/* ---------- taskbar ---------- */

const EarthHearts = () => (
  <svg viewBox="0 0 72 40" className="w-[72px] shrink-0 self-stretch">
    <circle cx="36" cy="39" r="22" fill="#6db4f5" />
    <path d="M30 18c10-3 22 2 27 16v6H38c-3-6-4-8 2-11-7-1-13-5-10-11z" fill="#55a03a" />
    <path d="M16 33c5-3 11 0 11 7H15z" fill="#4ca645" />
    <path d="M25 30c3-3 8-2 10 0M41 26c3-2 6-1 7 1" stroke="#eaf6ff" strokeWidth="3" fill="none" />
    <path d="M36 14c-6-4-8-7-5-10 2-1 4 0 5 2 1-2 4-3 6-1 2 3-1 6-6 9z" fill="#f2644b" />
    <path d="M18 19c-5-1-7-4-5-7 1-1 3-1 4 0 1-1 4-1 5 1 0 2-1 4-4 6z" fill="#3db06b" />
    <path d="M53 20c-3-3-4-6-2-8 2-1 3 0 4 1 2-1 5 0 5 3s-3 4-7 4z" fill="#f8bd37" />
    <path d="M8 35c-5-2-7-6-5-9 2-2 4-1 5 1 2-1 5 1 4 4-1 2-2 3-4 4z" fill="#a87be0" />
    <path d="M64 36c-4-2-6-4-4-7 1-1 3-1 4 0 1-2 4-1 4 2s-2 4-4 5z" fill="#3b97e8" />
  </svg>
)

const TaskButton = ({ label, open, children }: { label: string; open?: boolean; children: ReactNode }) => (
  <button aria-label={label} className="relative flex items-center justify-center w-12 h-10">
    {children}
    {open && <span className="absolute bottom-0 left-1 right-1 h-[3px] bg-[#76b9ed]" />}
  </button>
)

const Taskbar = () => (
  <footer className="flex items-center h-10 shrink-0 bg-gradient-to-r from-[#001b29] via-[#011420] to-[#020a1c] text-white">
    <TaskButton label="Start">
      <svg viewBox="0 0 16 16" className="w-4" fill="#fff">
        <path d="M0 2.300l6.500-1v6.200H0zM7.500 1.200L16 0v7.500H7.500zM0 8.500h6.500v6.200L0 13.700zM7.500 8.500H16V16l-8.500-1.200z" />
      </svg>
    </TaskButton>
    <label className="flex items-center w-[288px] h-full pl-3 pr-1 bg-[#f2f2f2] border-x border-[#cfcfcf] text-[#222]">
      <SearchGlass className="w-4 shrink-0" weight={1.2} />
      <input type="text" aria-label="Type here to search" placeholder="Type here to search" className="flex-1 min-w-0 ml-[10px] outline-none text-[14px] placeholder:text-[#333]" />
      <EarthHearts />
    </label>
    <TaskButton label="Task View">
      <svg viewBox="0 0 16 16" className="w-4" fill="none" stroke="#fff">
        <path d="M.5 3V.5M10.500 3V.5M.5 2.500h10M1.500 5.500h8v5h-8zM.5 16v-3M10.500 16v-3M.5 13.500h10M14.500 0v4M14.500 8v8" />
        <rect x="13.500" y="4.500" width="2" height="2" fill="#fff" />
      </svg>
    </TaskButton>
    <div className="flex gap-px ml-[3px]">
      <TaskButton label="Microsoft Edge" open><EdgeIcon className="size-6" /></TaskButton>
      <TaskButton label="File Explorer" open>
        <svg viewBox="0 0 24 24" className="w-6">
          <path d="M2 3h8l2 2h10v15H2z" fill="#f7c64a" />
          <path d="M2 7h20v14H2z" fill="#fddc7c" />
          <path d="M6 21v-7h12v7h-3v-3H9v3z" fill="#3f98e2" />
        </svg>
      </TaskButton>
      <TaskButton label="Firefox"><FirefoxIcon className="size-6" /></TaskButton>
      <TaskButton label="GoXLR Utility" open>
        <svg viewBox="0 0 24 24" className="w-6" stroke="#fff" strokeWidth="1.600" fill="none">
          <path d="M1 1l8.500 9c2 2 3 2 5 0L23 1M1 23l8.500-9c2-2 3-2 5 0L23 23" />
        </svg>
      </TaskButton>
    </div>
    <div className="ml-auto flex items-center h-full pr-[4px]">
      <button aria-label="Show hidden icons" className="mr-[9px]"><Chevron dir="up" className="w-[14px]" weight={1.1} /></button>
      <svg viewBox="0 0 16 16" className="w-4 mr-2" fill="none" stroke="#fff">
        <rect x="3.500" y="4.500" width="7" height="7" rx="1.500" />
        <path d="M10.500 7l3-2v6l-3-2M4 1.500c2-1.500 5-1.500 7 0M4 14.500c2 1.500 5 1.500 7 0" />
      </svg>
      <svg viewBox="0 0 16 16" className="w-4 mr-2" fill="none" stroke="#fff">
        <path d="M4.500 3.500h11v8h-10M10.500 11.500v3M7 14.500h7M.5 2.500h4v3h-4zM2.500 5.500v9h4" />
      </svg>
      <svg viewBox="0 0 18 16" className="w-[18px] mr-[7px]" fill="none" stroke="#fff">
        <path d="M.5 5.500h3l4-4v13l-4-4h-3zM10 5.500c1.200 1.500 1.200 3.500 0 5M12.500 3.500c2.300 2.500 2.300 6.500 0 9M15 1.500c3.300 3.500 3.300 9.500 0 13" />
      </svg>
      <div className="w-[56px] text-center text-[11px] leading-[18px] whitespace-nowrap">
        <div>9:35 PM</div>
        <div>8/30/2024</div>
      </div>
      <button aria-label="Notifications" className="ml-[16px]">
        <svg viewBox="0 0 16 16" className="w-4" fill="none" stroke="#fff">
          <path d="M.5 1.500h15v11H11l-3 3v-3H.5z" />
        </svg>
      </button>
      <span className="ml-[19px] w-px h-full bg-[#3a4550]" />
    </div>
  </footer>
)

export default function App() {
  return (
    <div className="flex flex-col h-screen overflow-hidden font-['Open_Sans','Noto_Sans',sans-serif]">
      <main className="relative flex-1 bg-[radial-gradient(ellipse_180px_360px_at_84%_36%,rgba(4,86,228,0.7),transparent),radial-gradient(ellipse_500px_420px_at_14%_80%,rgba(0,184,255,0.9),transparent),linear-gradient(90deg,#00a6fb_0%,#009bf6_22%,#007ee2_48%,#0050c8_78%,#033ab8_100%)]">
        <DesktopIcons />
        <ExplorerWindow />
        <ErrorDialog />
        <Watermark />
        <div className="absolute right-[5px] bottom-0 text-right text-[11px] leading-[17px] text-white">
          <p>Test Mode</p>
          <p>Windows 10 Pro</p>
          <p>Build 19041.vb_release.191206-1406</p>
        </div>
      </main>
      <Taskbar />
    </div>
  )
}
